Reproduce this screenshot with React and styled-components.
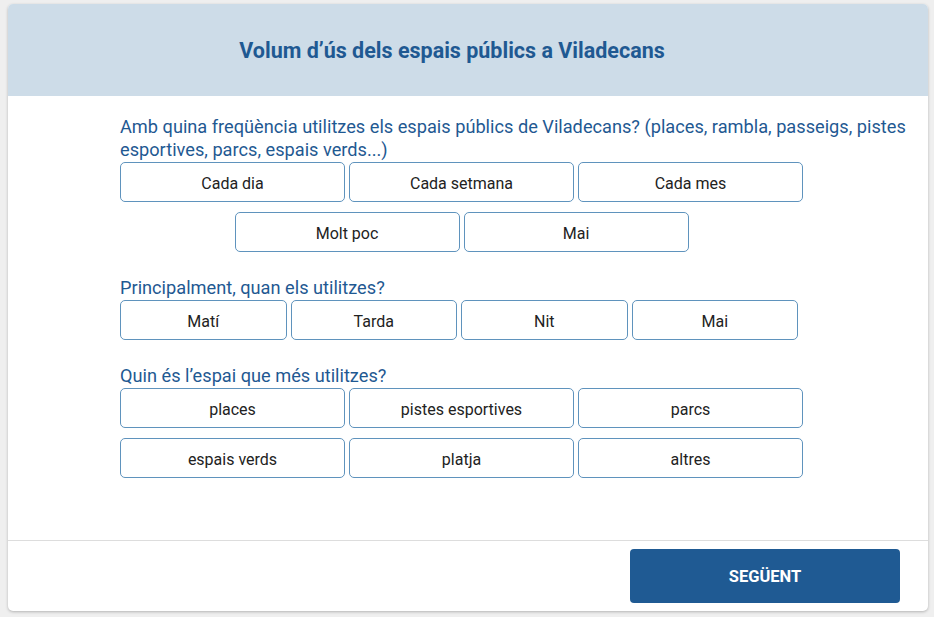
import styled, { createGlobalStyle } from 'styled-components';

const GlobalStyle = createGlobalStyle`
  body {
    margin: 0;
    background: #efefef;
    font-family: Roboto, "Liberation Sans", sans-serif;
  }
`;

const Page = styled.div`
  padding: 4px 6px 6px 8px;
`;

const Card = styled.div`
  width: 920px;
  height: 607px;
  background: #fff;
  border-radius: 5px;
  box-shadow: 0 1px 3px rgba(0, 0, 0, 0.25);
  display: flex;
  flex-direction: column;
  overflow: hidden;
`;

const Header = styled.div`
  height: 92px;
  background: #cddce8;
  display: flex;
  align-items: center;
  justify-content: center;
  padding-right: 32px;
`;

const Title = styled.h1`
  margin: 0;
  font-size: 21.5px;
  font-weight: 700;
  color: #1f5992;
`;

const Body = styled.div`
  flex: 1;
  padding: 19px 14px 0 112px;
`;

const Question = styled.div`
  & + & {
    margin-top: 24px;
  }
`;

const Label = styled.p`
  margin: 0 0 1px;
  font-size: 18.2px;
  line-height: 23px;
  color: #1f5992;
`;

const Options = styled.div`
  width: 683px;
  display: flex;
  flex-wrap: wrap;
  justify-content: ${({ $justify }) => $justify || 'center'};
  gap: 10px 4px;
`;

const Option = styled.button`
  width: ${({ $w }) => $w}px;
  height: 40px;
  box-sizing: border-box;
  padding: 3px 0 0;
  background: #fff;
  border: 1px solid #5f93bd;
  border-radius: 5px;
  font-family: Roboto, "Liberation Sans", sans-serif;
  font-size: 16px;
  color: #222;
  cursor: pointer;
`;

const Footer = styled.div`
  border-top: 1px solid #ddd;
  padding: 8px 28px;
  display: flex;
  justify-content: flex-end;
`;

const Next = styled.button`
  width: 270px;
  height: 54px;
  background: #1f5a93;
  border: none;
  border-radius: 4px;
  color: #fff;
  font-family: Roboto, "Liberation Sans", sans-serif;
  font-size: 16.5px;
  font-weight: 700;
  cursor: pointer;
`;

const questions = [
  {
    label: 'Amb quina freqüència utilitzes els espais públics de Viladecans? (places, rambla, passeigs, pistes esportives, parcs, espais verds...)',
    options: ['Cada dia', 'Cada setmana', 'Cada mes', 'Molt poc', 'Mai'],
    w: 225,
  },
  {
    label: 'Principalment, quan els utilitzes?',
    options: ['Matí', 'Tarda', 'Nit', 'Mai'],
    w: 166.5,
    justify: 'flex-start',
  },
  {
    label: 'Quin és l’espai que més utilitzes?',
    options: ['places', 'pistes esportives', 'parcs', 'espais verds', 'platja', 'altres'],
    w: 225,
  },
];

const App = () => {
  return (
    <>
      <GlobalStyle />
      <Page>
        <Card>
          <Header>
            <Title>Volum d’ús dels espais públics a Viladecans</Title>
          </Header>
          <Body>
            {questions.map((q) => (
              <Question key={q.label}>
                <Label>{q.label}</Label>
                <Options $justify={q.justify}>
                  {q.options.map((o) => (
                    <Option key={o} $w={q.w}>{o}</Option>
                  ))}
                </Options>
              </Question>
            ))}
          </Body>
          <Footer>
            <Next>SEGÜENT</Next>
          </Footer>
        </Card>
      </Page>
    </>
  );
};

export default App;
